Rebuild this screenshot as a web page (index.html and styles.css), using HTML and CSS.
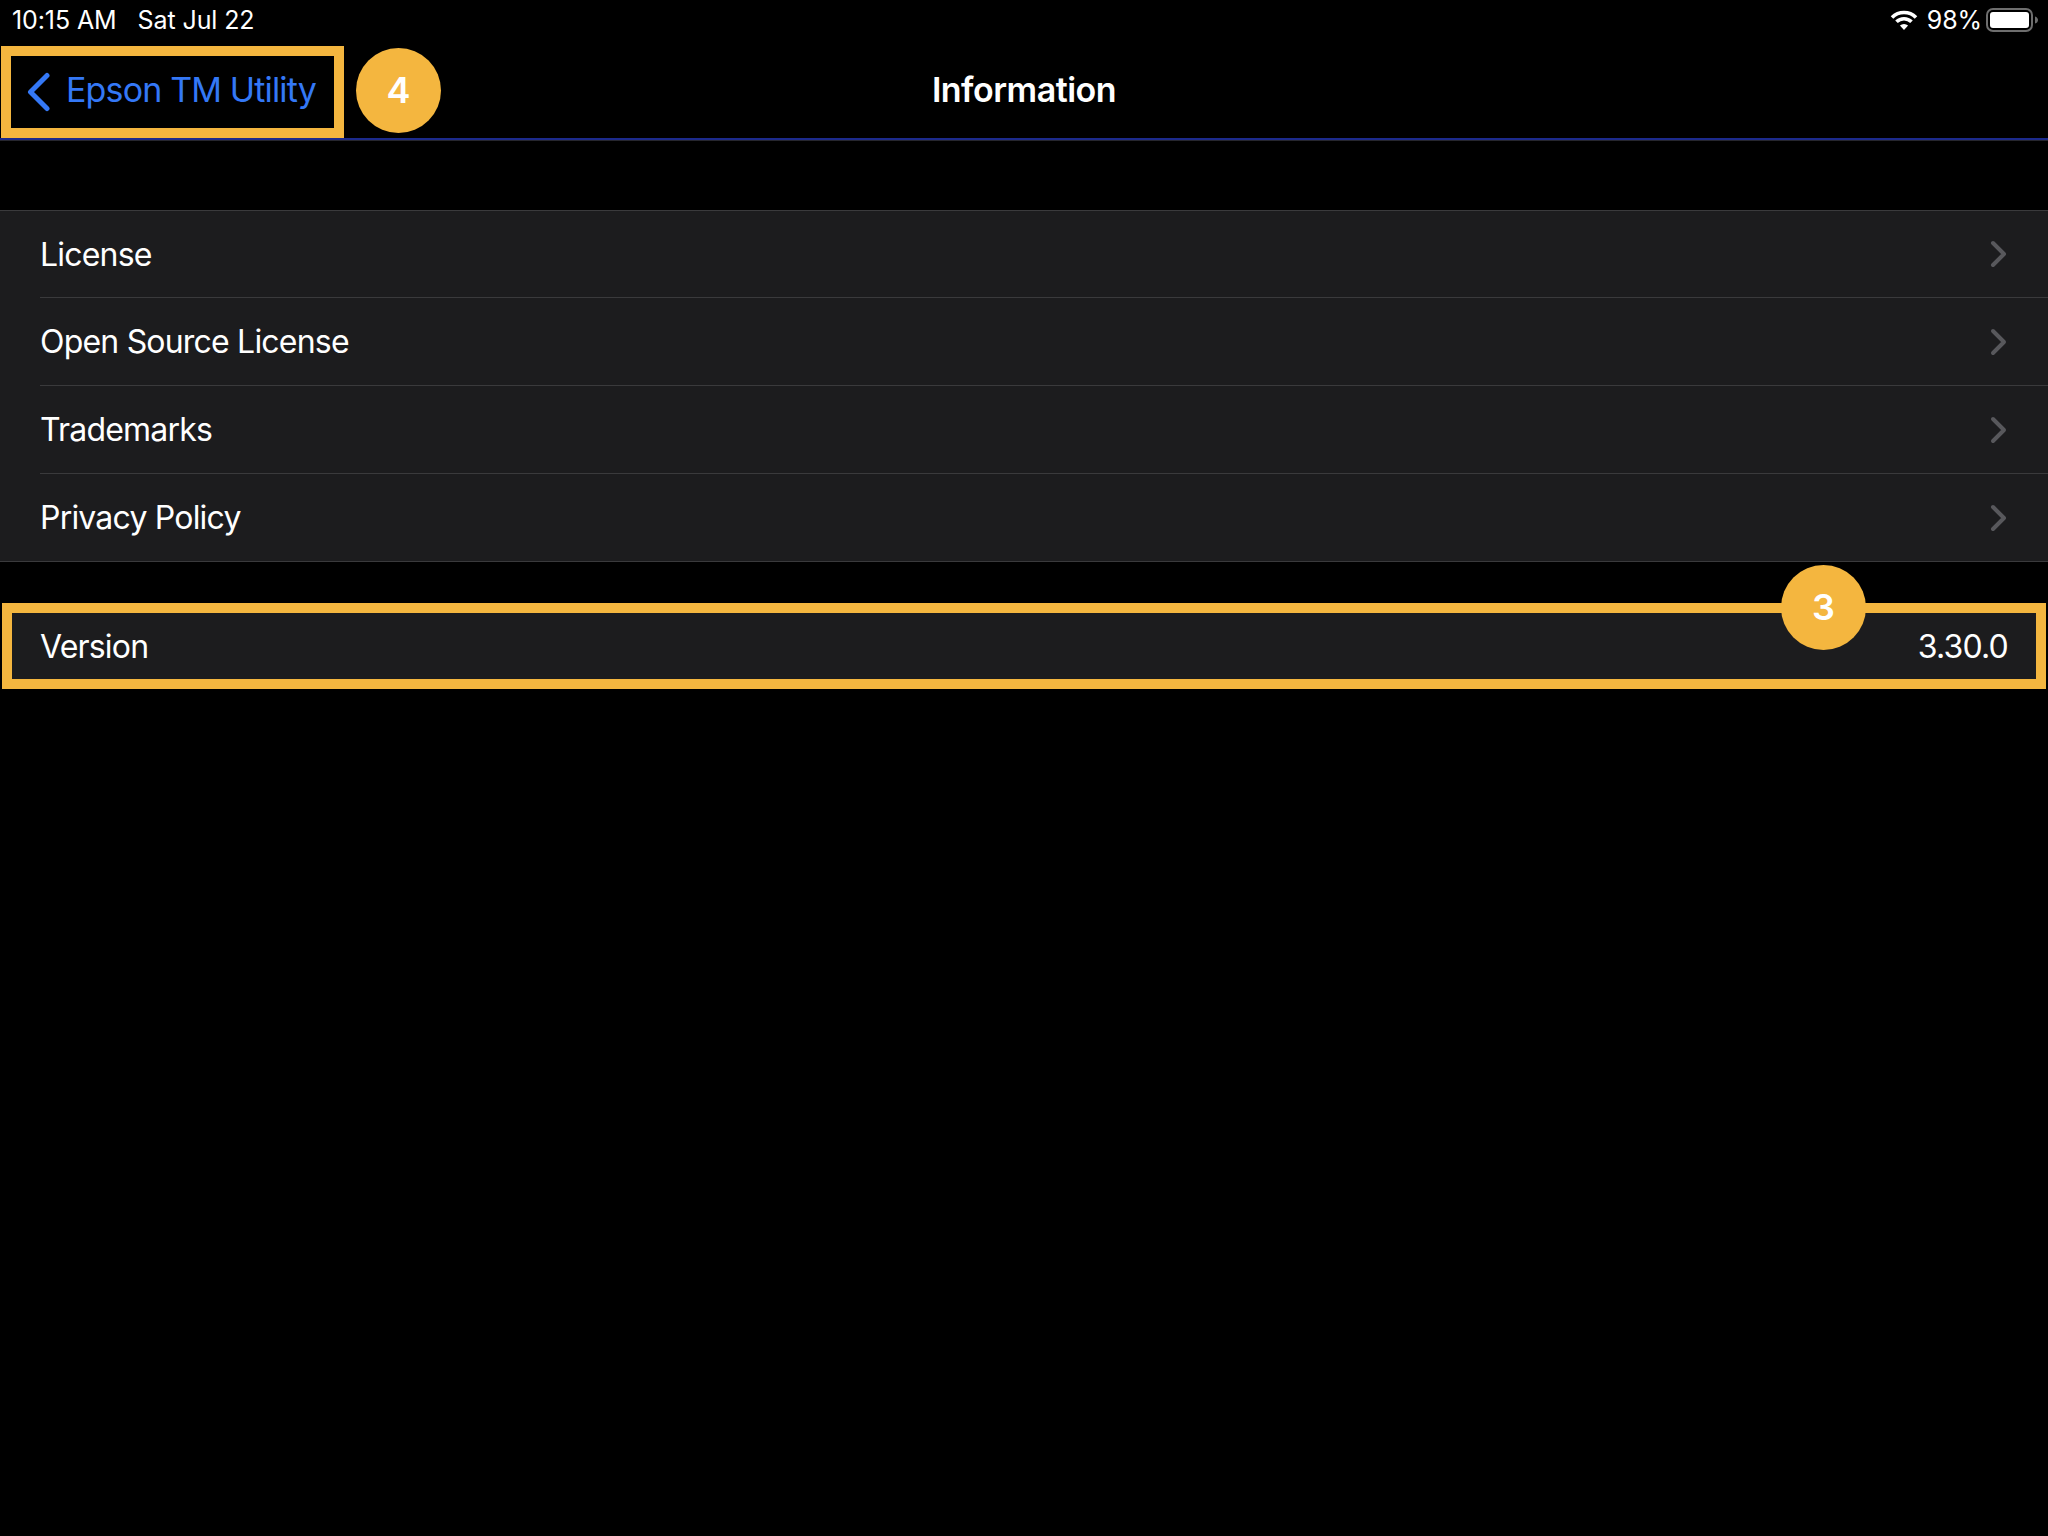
FILE: index.html
```html
<!DOCTYPE html>
<html lang="en">
<head>
<meta charset="utf-8">
<title>Information</title>
<link rel="stylesheet" href="styles.css">
</head>
<body>
<div class="status">
  <div class="status-left"><span>10:15 AM</span><span>Sat Jul 22</span></div>
  <div class="status-right">
    <svg class="wifi" width="28" height="20" viewBox="0 0 28 20"><path d="M2 7.5a17 17 0 0 1 24 0" class="w"/><path d="M6.5 11.8a10.6 10.6 0 0 1 15 0" class="w"/><path d="M14 20l-4.1-4.4a6 6 0 0 1 8.200 0z" fill="#fff"/></svg>
    <span>98%</span>
    <svg class="battery" width="52" height="24" viewBox="0 0 52 24"><rect x="1" y="1" width="45" height="22" rx="6" fill="none" stroke="#6e6e6e" stroke-width="2"/><rect x="4" y="4" width="39" height="16" rx="3" fill="#fff"/><path d="M49 8.500c2 .5 3 2 3 3.500s-1 3-3 3.500z" fill="#6e6e6e"/></svg>
  </div>
</div>
<nav class="nav">
  <div class="nav-left">
    <a class="back">
      <svg class="back-icon" width="26" height="40" viewBox="0 0 26 40"><path d="M21 3.500 4.500 20 21 36.500" fill="none" stroke="#3478f6" stroke-width="5" stroke-linecap="round" stroke-linejoin="round"/></svg>
      <span class="back-label">Epson TM Utility</span>
    </a>
    <div class="badge">4</div>
  </div>
  <h1 class="title">Information</h1>
</nav>
<ul class="group">
  <li class="row"><div class="row-in"><span>License</span><svg class="chev" width="18" height="28" viewBox="0 0 18 28"><path d="M3 3l11 11L3 25" fill="none" stroke="#58585c" stroke-width="4" stroke-linecap="round" stroke-linejoin="round"/></svg></div></li>
  <li class="row"><div class="row-in"><span>Open Source License</span><svg class="chev" width="18" height="28" viewBox="0 0 18 28"><path d="M3 3l11 11L3 25" fill="none" stroke="#58585c" stroke-width="4" stroke-linecap="round" stroke-linejoin="round"/></svg></div></li>
  <li class="row"><div class="row-in"><span>Trademarks</span><svg class="chev" width="18" height="28" viewBox="0 0 18 28"><path d="M3 3l11 11L3 25" fill="none" stroke="#58585c" stroke-width="4" stroke-linecap="round" stroke-linejoin="round"/></svg></div></li>
  <li class="row"><div class="row-in"><span>Privacy Policy</span><svg class="chev" width="18" height="28" viewBox="0 0 18 28"><path d="M3 3l11 11L3 25" fill="none" stroke="#58585c" stroke-width="4" stroke-linecap="round" stroke-linejoin="round"/></svg></div></li>
</ul>
<div class="version">
  <span>Version</span><span>3.30.0</span>
  <div class="badge badge-over">3</div>
</div>
</body>
</html>
```
FILE: styles.css
```css
* { box-sizing: border-box; }
html, body { margin: 0; padding: 0; }
body {
  width: 2048px;
  height: 1536px;
  overflow: hidden;
  background: #000;
  color: #fff;
  font-family: Inter, "Liberation Sans", sans-serif;
  position: relative;
}
.status {
  height: 40px;
  display: flex;
  justify-content: space-between;
  align-items: center;
  font-size: 25px;
  letter-spacing: -0.1px;
  padding: 0 10px 0 12px;
}
.status-left { display: flex; gap: 21px; }
.status-right { display: flex; align-items: center; gap: 9px; }
.w { fill: none; stroke: #fff; stroke-width: 3.6; }
.wifi { display: block; }
.battery { display: block; margin-left: -5px; }
.nav {
  height: 100px;
  border-bottom: 2px solid #1c2a8c;
  box-shadow: 0 1px 0 #26262e;
  position: relative;
  display: flex;
  align-items: flex-end;
}
.nav-left { display: flex; align-items: flex-start; gap: 12px; padding-left: 1px; height: 98px; }
.back {
  width: 343px;
  height: 92px;
  border: 10px solid #f4b63f;
  display: flex;
  align-items: center;
  padding-left: 15px;
  gap: 14px;
  color: #3478f6;
  font-size: 34px;
  letter-spacing: -0.85px;
  margin-top: 6px;
}
.back-icon { display: block; }
.back-label { position: relative; top: -3px; }
.nav-left > .badge { margin-top: 8px; }
.badge {
  width: 85px;
  height: 85px;
  border-radius: 50%;
  background: #f4b63f;
  color: #fff;
  font-size: 36px;
  letter-spacing: 0;
  font-weight: 600;
  padding-bottom: 2px;
  display: flex;
  align-items: center;
  justify-content: center;
  flex: none;
}
.title {
  position: absolute;
  left: 0;
  right: 0;
  top: 30px;
  margin: 0;
  text-align: center;
  font-size: 34px;
  letter-spacing: -0.5px;
  line-height: 40px;
  font-weight: 600;
  pointer-events: none;
}
.group {
  list-style: none;
  margin: 70px 0 0;
  padding: 0;
  background: #1c1c1e;
  border-top: 1px solid #3a3a3c;
  border-bottom: 1px solid #3a3a3c;
}
.row { padding-left: 40px; height: 88px; }
.row:first-child { height: 87px; }
.row:last-child { height: 87px; }
.row-in {
  height: 100%;
  display: flex;
  justify-content: space-between;
  align-items: center;
  padding-right: 40px;
  font-size: 32px;
  letter-spacing: -0.8px;
  border-bottom: 1px solid #3a3a3c;
}
.row:last-child .row-in { border-bottom: 0; }
.chev { display: block; }
.version {
  position: relative;
  margin: 41px 2px 0;
  height: 86px;
  background: #1c1c1e;
  border: 10px solid #f4b63f;
  display: flex;
  justify-content: space-between;
  align-items: center;
  padding: 0 28px 0 28px;
  font-size: 32px;
  letter-spacing: -0.8px;
}
.badge-over {
  position: absolute;
  left: 1769px;
  top: -48px;
}
```
